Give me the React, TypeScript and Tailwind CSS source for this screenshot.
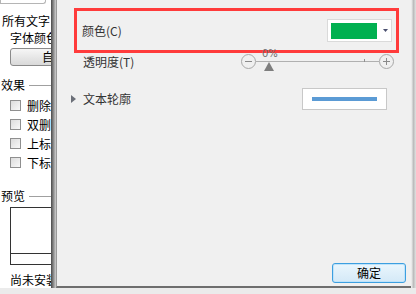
import React from "react";

const font = { fontFamily: '"Noto Sans CJK SC", "Noto Sans", sans-serif' };

function Check({ label }: { label: string }) {
  return (
    <div className="flex items-center h-[19px] pl-[10px]">
      <div className="w-[11px] h-[11px] border border-[#8f8f8f] bg-gradient-to-br from-[#dcdcdc] to-[#f8f8f8] shrink-0" />
      <span className="ml-[6px] text-[12px] leading-none text-black whitespace-nowrap">{label}</span>
    </div>
  );
}

function LeftDialog() {
  return (
    <div className="w-[51px] shrink-0 overflow-hidden bg-white">
      <div className="w-[140px] flex flex-col">
        <div className="h-[4px] w-[46px] border border-t-0 border-[#b5b5b5] rounded-br-[3px] bg-white" />
        <div className="mt-[10px] pl-[2px] text-[12px] leading-[14px] text-black whitespace-nowrap">所有文字</div>
        <div className="mt-[3px] pl-[10px] text-[12px] leading-[14px] text-black whitespace-nowrap">字体颜色</div>
        <div className="mt-[3px] ml-[10px] h-[18px] w-[80px] border border-[#8a8a8a] rounded-[3px] bg-gradient-to-b from-[#f6f6f6] to-[#d9d9d9] flex items-center pl-[31px] text-[12px] leading-none text-black">
          自动
        </div>
        <div className="mt-[12px] flex items-center h-[14px]">
          <span className="pl-[1px] text-[12px] leading-none text-black whitespace-nowrap">效果</span>
          <div className="ml-[4px] h-px w-[60px] bg-[#a0a0a0]" />
        </div>
        <div className="mt-[4px] flex flex-col">
          <Check label="删除线" />
          <Check label="双删除线" />
          <Check label="上标" />
          <Check label="下标" />
        </div>
        <div className="mt-[17px] flex items-center h-[14px]">
          <span className="pl-[1px] text-[12px] leading-none text-black whitespace-nowrap">预览</span>
          <div className="ml-[4px] h-px w-[60px] bg-[#a0a0a0]" />
        </div>
        <div className="mt-[4px] ml-[10px] w-[80px] h-[58px] border border-[#333] bg-white flex flex-col">
          <div className="flex-1" />
          <div className="h-[11px] border-t border-[#333]" />
        </div>
        <div className="mt-[8px] pl-[10px] text-[12px] leading-[14px] text-black whitespace-nowrap">尚未安装此字体</div>
      </div>
    </div>
  );
}

function Slider() {
  return (
    <div className="relative flex items-center w-[153px] h-[17px]">
      <div className="w-[15px] h-[15px] rounded-full border border-[#a8a8a8] flex items-center justify-center shrink-0">
        <div className="w-[7px] h-px bg-[#8a8a8a]" />
      </div>
      <div className="flex-1 h-px bg-[#b0b0b0] relative">
        <div className="absolute left-[108px] top-[-2px] w-px h-[3px] bg-[#909090]" />
      </div>
      <div className="w-[15px] h-[15px] rounded-full border border-[#a8a8a8] flex items-center justify-center shrink-0 relative">
        <div className="w-[7px] h-px bg-[#8a8a8a]" />
        <div className="absolute w-px h-[7px] bg-[#8a8a8a]" />
      </div>
      <div className="absolute left-[21px] top-[-4px] text-[10px] leading-none text-[#6e6e6e]" style={{ fontFamily: '"DejaVu Sans", sans-serif' }}>
        0%
      </div>
      <svg className="absolute left-[23px] top-[9px]" width="10" height="9" viewBox="0 0 10 9">
        <polygon points="5,0 10,9 0,9" fill="#7e7e7e" />
      </svg>
    </div>
  );
}

function Panel() {
  return (
    <div className="flex-1 bg-[#f0f0f0] border-l border-[#9a9a9a] border-b-2 border-b-[#6e6e6e] flex flex-col">
      <div className="ml-[17px] mt-[8px] w-[325px] h-[45px] border-[3px] border-[#ff3b3b] flex items-center justify-between pl-[5px] pr-[4px]">
        <span className="text-[12px] leading-none text-[#333]">颜色(C)</span>
        <div className="w-[65px] h-[23px] bg-white border border-[#dadada] flex items-center pl-[3px]">
          <div className="w-[46px] h-[16px] bg-[#00b050]" />
          <svg className="ml-[6px]" width="5" height="3" viewBox="0 0 5 3">
            <polygon points="0,0 5,0 2.5,3" fill="#4a5070" />
          </svg>
        </div>
      </div>
      <div className="flex items-center h-[17px] mt-[0px] pl-[26px]">
        <span className="text-[12px] leading-none text-[#333] w-[158px]">透明度(T)</span>
        <Slider />
      </div>
      <div className="flex items-center h-[22px] mt-[18px] pl-[14px]">
        <svg width="5" height="8" viewBox="0 0 5 8">
          <polygon points="0,0 5,4 0,8" fill="#6b6f78" />
        </svg>
        <span className="ml-[7px] text-[12px] leading-none text-[#333] w-[219px]">文本轮廓</span>
        <div className="w-[85px] h-[22px] bg-white border border-[#c8c8c8] flex items-center justify-center">
          <div className="w-[65px] h-[4px] bg-[#5b9bd5]" />
        </div>
      </div>
      <div className="flex-1" />
      <div className="flex justify-end pr-[5px] mb-[3px]">
        <div className="w-[74px] h-[20px] rounded-[3px] border border-[#3c9fe0] bg-gradient-to-b from-[#eaf6fd] to-[#d4e9f7] flex items-center justify-center shadow-[inset_0_0_0_1px_#bfe3fa] text-[12px] leading-none text-black">
          确定
        </div>
      </div>
    </div>
  );
}

export default function App() {
  return (
    <div className="w-[416px] h-[294px] overflow-hidden bg-[#ececec] flex flex-col" style={font}>
      <div className="flex h-[288px]">
        <LeftDialog />
        <div className="w-[5px] shrink-0 bg-gradient-to-r from-[#4a4a4a] via-[#8c8c8c] to-[#d0d0d0]" />
        <Panel />
        <div className="w-[5px] shrink-0 bg-gradient-to-r from-[#f4f4f4] via-[#bdbdbd] to-[#e2e2e2]" />
      </div>
      <div className="flex-1 bg-[#ebebeb]" />
    </div>
  );
}
